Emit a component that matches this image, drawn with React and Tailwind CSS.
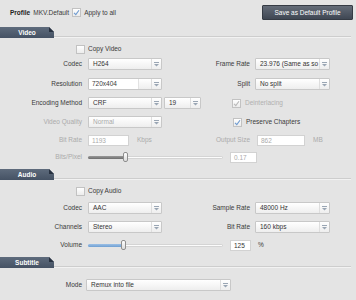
import React from 'react';

const Arrow = () => (
  <svg width="5" height="5" viewBox="0 0 5 5">
    <rect x="0" y="0" width="5" height="1" fill="#9aa6b4" />
    <polygon points="0,2 5,2 2.5,4.6" fill="#9aa6b4" />
  </svg>
);

const Select = ({ value, w, disabled }) => (
  <div
    className={`${w} h-[12px] flex border border-[#c8c8c8] rounded-[1px] bg-gradient-to-b from-[#ffffff] to-[#eeeeee] ${
      disabled ? 'text-[#a9a9a9]' : 'text-[#333]'
    }`}
  >
    <span className="flex-1 pl-[4px] leading-[10px] overflow-hidden whitespace-nowrap">{value}</span>
    <span className="w-[10px] border-l border-[#dedede] flex items-center justify-center">
      <Arrow />
    </span>
  </div>
);

const Input = ({ value, w, disabled }) => (
  <div
    className={`${w} h-[11px] border border-[#d2d2d2] bg-white pl-[3px] leading-[9px] ${
      disabled ? 'text-[#ababab] bg-[#f4f4f4]' : 'text-[#333]'
    }`}
  >
    {value}
  </div>
);

const Check = ({ checked, disabled }) => (
  <div className="w-[9px] h-[9px] border border-[#c2c2c2] bg-gradient-to-b from-[#ffffff] to-[#ececec] flex items-center justify-center">
    {checked && (
      <svg width="7" height="7" viewBox="0 0 7 7">
        <polyline
          points="1,3.8 2.8,5.6 6,1.2"
          fill="none"
          stroke={disabled ? '#b9b9b9' : '#6f9bd0'}
          strokeWidth="1.1"
        />
      </svg>
    )}
  </div>
);

const Slider = ({ pos, fill }) => (
  <div className="relative w-[135px] h-[12px] flex items-center">
    <div className="w-full h-[3px] rounded-full bg-gradient-to-b from-[#f8f8f8] to-[#ffffff] border border-[#d4d4d4]" />
    <div className={`absolute left-0 h-[3px] rounded-l-full ${fill}`} style={{ width: pos }} />
    <div
      className="absolute w-[5px] h-[10px] rounded-[2px] border border-[#8f8f8f] bg-gradient-to-b from-[#ffffff] to-[#dcdcdc]"
      style={{ left: pos - 2 }}
    />
  </div>
);

const Section = ({ title, className }) => (
  <div className={`flex items-end h-[11px] ${className}`}>
    <div className="relative w-[54px] h-[11px] bg-gradient-to-b from-[#5e6b7c] to-[#455264] text-white font-bold flex items-center justify-center">
      {title}
      <svg className="absolute right-0 top-0" width="5" height="5" viewBox="0 0 5 5">
        <polygon points="0,0 5,0 5,5" fill="#e4e4e4" />
        <polygon points="0,0 5,5 0,5" fill="#273140" />
      </svg>
    </div>
    <div className="flex-1 mr-[5px] h-[2px] border-t border-[#cdcdcd] border-b border-b-[#f2f2f2]" />
  </div>
);

const L1 = ({ children, disabled }) => (
  <span className={`w-[82px] text-right ${disabled ? 'text-[#ababab]' : ''}`}>{children}</span>
);
const L2 = ({ children, disabled }) => (
  <span className={`w-[50px] text-right ${disabled ? 'text-[#ababab]' : ''}`}>{children}</span>
);

export default function App() {
  return (
    <div className="w-[356px] h-[300px] overflow-hidden bg-[#e4e4e4] text-[6.5px] text-[#3a3a3a] font-['Liberation_Sans',Arial,sans-serif] pt-[5px]">
      {/* profile bar */}
      <div className="flex items-center h-[15px]">
        <span className="ml-[10px] font-bold text-[#222]">Profile</span>
        <span className="ml-[3px]">MKV.Default</span>
        <span className="ml-[3px]"><Check checked /></span>
        <span className="ml-[3px]">Apply to all</span>
        <button className="ml-auto mr-[3px] w-[91px] h-[15px] text-white bg-gradient-to-b from-[#646c78] to-[#3f4753] border border-[#353b44] rounded-[1px]">
          Save as Default Profile
        </button>
      </div>

      {/* Video */}
      <Section title="Video" className="mt-[7px]" />

      <div className="flex items-center h-[10px] mt-[6px]">
        <span className="ml-[76px]"><Check /></span>
        <span className="ml-[3px]">Copy Video</span>
      </div>

      <div className="flex items-center h-[12px] mt-[4px]">
        <L1>Codec</L1>
        <div className="w-[118px] pl-[6px]"><Select w="w-[74px]" value="H264" /></div>
        <L2>Frame Rate</L2>
        <div className="pl-[5px]"><Select w="w-[75px]" value="23.976 (Same as so" /></div>
      </div>

      <div className="flex items-center h-[12px] mt-[8px]">
        <L1>Resolution</L1>
        <div className="w-[118px] pl-[6px]">
          <div className="w-[74px] h-[12px] flex border border-[#c8c8c8] rounded-[1px] bg-gradient-to-b from-[#ffffff] to-[#eeeeee]">
            <span className="w-[50px] h-[10px] bg-white border-r border-[#e2e2e2] pl-[3px] leading-[10px]">720x404</span>
            <span className="flex-1" />
            <span className="w-[10px] border-l border-[#dedede] flex items-center justify-center"><Arrow /></span>
          </div>
        </div>
        <L2>Split</L2>
        <div className="pl-[5px]"><Select w="w-[75px]" value="No split" /></div>
      </div>

      <div className="flex items-center h-[12px] mt-[7px]">
        <L1>Encoding Method</L1>
        <div className="w-[150px] pl-[6px] flex gap-[2px]">
          <Select w="w-[74px]" value="CRF" />
          <Select w="w-[37px]" value="19" />
        </div>
        <Check checked disabled />
        <span className="ml-[4px] text-[#b0b0b0]">Deinterlacing</span>
      </div>

      <div className="flex items-center h-[12px] mt-[7px]">
        <L1 disabled>Video Quality</L1>
        <div className="w-[151px] pl-[6px]"><Select w="w-[74px]" value="Normal" disabled /></div>
        <Check checked />
        <span className="ml-[4px]">Preserve Chapters</span>
      </div>

      <div className="flex items-center h-[12px] mt-[6px]">
        <L1 disabled>Bit Rate</L1>
        <div className="w-[118px] pl-[6px] flex items-center">
          <Input w="w-[41px]" value="1193" disabled />
          <span className="ml-[8px] text-[#ababab]">Kbps</span>
        </div>
        <L2 disabled>Output Size</L2>
        <div className="pl-[7px] flex items-center">
          <Input w="w-[48px]" value="862" disabled />
          <span className="ml-[8px] text-[#ababab]">MB</span>
        </div>
      </div>

      <div className="flex items-center h-[12px] mt-[5px]">
        <L1 disabled>Bits/Pixel</L1>
        <div className="pl-[6px] flex items-center">
          <Slider pos={37} fill="bg-gradient-to-b from-[#9a9a9a] to-[#6e6e6e]" />
          <span className="ml-[7px]"><Input w="w-[27px]" value="0.17" disabled /></span>
        </div>
      </div>

      {/* Audio */}
      <Section title="Audio" className="mt-[6px]" />

      <div className="flex items-center h-[10px] mt-[6px]">
        <span className="ml-[76px]"><Check /></span>
        <span className="ml-[3px]">Copy Audio</span>
      </div>

      <div className="flex items-center h-[12px] mt-[6px]">
        <L1>Codec</L1>
        <div className="w-[118px] pl-[6px]"><Select w="w-[74px]" value="AAC" /></div>
        <L2>Sample Rate</L2>
        <div className="pl-[5px]"><Select w="w-[75px]" value="48000 Hz" /></div>
      </div>

      <div className="flex items-center h-[12px] mt-[7px]">
        <L1>Channels</L1>
        <div className="w-[118px] pl-[6px]"><Select w="w-[74px]" value="Stereo" /></div>
        <L2>Bit Rate</L2>
        <div className="pl-[5px]"><Select w="w-[75px]" value="160 kbps" /></div>
      </div>

      <div className="flex items-center h-[12px] mt-[6px]">
        <L1>Volume</L1>
        <div className="pl-[6px] flex items-center">
          <Slider pos={35} fill="bg-gradient-to-b from-[#9cc0e6] to-[#6f9fd2]" />
          <span className="ml-[7px]"><Input w="w-[21px]" value="125" /></span>
          <span className="ml-[7px]">%</span>
        </div>
      </div>

      {/* Subtitle */}
      <Section title="Subtitle" className="mt-[6px]" />

      <div className="flex items-center h-[12px] mt-[11px]">
        <L1>Mode</L1>
        <div className="pl-[4px]"><Select w="w-[145px]" value="Remux into file" /></div>
      </div>
    </div>
  );
}
